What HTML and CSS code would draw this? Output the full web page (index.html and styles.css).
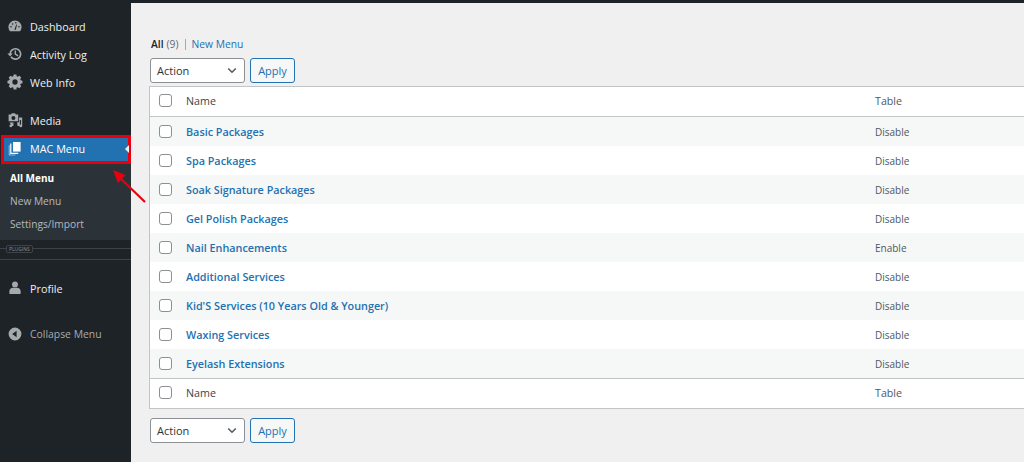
FILE: index.html
```html
<!DOCTYPE html>
<html lang="en">
<head>
<meta charset="utf-8">
<title>MAC Menu</title>
<link rel="stylesheet" href="styles.css">
</head>
<body>
<div class="topbar"></div>
<div class="shell">
  <aside class="sidebar">
    <nav class="group first">
      <a class="item"><svg class="ico" viewBox="0 0 20 20"><path d="M3.800 16.600C2.600 15.200 1.800 13.300 1.800 11.200 1.800 6.700 5.500 3 10 3s8.200 3.700 8.200 8.200c0 2.100-.8 4-2 5.400H3.800z"/><path class="cut" d="M9.300 14.700l2.300-6.500.9.300-1.500 6.200z"/><circle class="cut" cx="5" cy="11" r="1"/><circle class="cut" cx="7" cy="7.500" r="1"/><circle class="cut" cx="11" cy="6" r="1"/><circle class="cut" cx="15" cy="11" r="1"/></svg><span>Dashboard</span></a>
      <a class="item"><svg class="ico" viewBox="0 0 20 20"><path d="M10.500 2.500a7.500 7.500 0 1 1-6.300 11.500l1.700-1.100a5.500 5.500 0 1 0-.9-3.400h2.300L3.800 13.200.5 9.500h2.500a7.500 7.500 0 0 1 7.500-7z"/><path d="M9.500 5.500h1.800v4.200l3 1.800-.9 1.500-3.900-2.300z"/></svg><span>Activity Log</span></a>
      <a class="item"><svg class="ico" viewBox="0 0 20 20"><path fill-rule="evenodd" d="M8.300 1.500h3.400l.4 2.300 1.300.6 2-1.300 2.400 2.400-1.300 2 .5 1.300 2.300.5v3.400l-2.300.4-.5 1.300 1.300 2-2.400 2.400-2-1.300-1.300.5-.4 2.300H8.300l-.5-2.300-1.300-.5-2 1.300-2.400-2.400 1.300-2-.5-1.300-2.300-.4V9.300l2.300-.5.5-1.300-1.300-2 2.400-2.400 2 1.300 1.300-.6zM10 7.700a3.300 3.300 0 1 0 0 6.600 3.300 3.300 0 0 0 0-6.600z" transform="translate(0 -1)"/></svg><span>Web Info</span></a>
    </nav>
    <nav class="group second">
      <a class="item"><svg class="ico" viewBox="0 0 20 20"><path fill-rule="evenodd" d="M2 3h3l1-1.500h4L11 3h3v8.500H2zM8 5a2.500 2.500 0 1 0 0 5 2.500 2.500 0 0 0 0-5z"/><path d="M13 13.500V12.700h2V7h4v10.500a1.700 1.700 0 1 1-1.500-1.700V10h-1.500v7.500h-2.900V15.700a1.500 1.500 0 0 1-.1-2.200z"/><path d="M3 13h5v4.500H6.400A1.700 1.700 0 1 1 5 15.700z"/></svg><span>Media</span></a>
    </nav>
    <a class="item active"><svg class="ico white" viewBox="0 0 20 20"><path d="M7.500 2.500h9.500v12H7.500z"/><path d="M5.500 4.500v11.500h8.500v1.500H4V4.500z"/><path d="M3 6.500v12h7.500v.6H2.300V6.500z"/></svg><span>MAC Menu</span></a>
    <div class="submenu">
      <a class="sub current">All Menu</a>
      <a class="sub">New Menu</a>
      <a class="sub">Settings/Import</a>
    </div>
    <div class="divider"><span class="tag">PLUGINS</span></div>
    <a class="item profile"><svg class="ico" viewBox="0 0 20 20"><circle cx="10" cy="5.500" r="3.700"/><path d="M3 17.500v-3.500c0-2.500 2-4.200 4.200-4.200h5.600c2.200 0 4.200 1.700 4.200 4.200v3.500z"/></svg><span>Profile</span></a>
    <a class="item collapse"><svg class="ico" viewBox="0 0 20 20"><path fill-rule="evenodd" d="M10 2a8 8 0 1 1 0 16 8 8 0 0 1 0-16zM12 6L6.500 10l5.500 4z"/></svg><span>Collapse Menu</span></a>
    <svg class="pointer" viewBox="0 0 40 40"><path d="M37 34L11 9"/><path class="head" d="M5 2l12.500 5L10 15z"/></svg>
  </aside>
  <main class="content">
    <p class="views"><b>All</b> <span class="count">(9)</span><i class="sep"></i><a>New Menu</a></p>
    <div class="bulk">
      <div class="select"><span>Action</span><svg viewBox="0 0 12 8"><path d="M1.500 1.500L6 6l4.500-4.500"/></svg></div>
      <button class="apply">Apply</button>
    </div>
    <div class="table">
      <div class="row head"><i class="check"></i><span class="name">Name</span><span class="tbl">Table</span></div>
      <div class="row odd"><i class="check"></i><a class="name">Basic Packages</a><span class="tbl">Disable</span></div>
      <div class="row"><i class="check"></i><a class="name">Spa Packages</a><span class="tbl">Disable</span></div>
      <div class="row odd"><i class="check"></i><a class="name">Soak Signature Packages</a><span class="tbl">Disable</span></div>
      <div class="row"><i class="check"></i><a class="name">Gel Polish Packages</a><span class="tbl">Disable</span></div>
      <div class="row odd"><i class="check"></i><a class="name">Nail Enhancements</a><span class="tbl">Enable</span></div>
      <div class="row"><i class="check"></i><a class="name">Additional Services</a><span class="tbl">Disable</span></div>
      <div class="row odd"><i class="check"></i><a class="name">Kid'S Services (10 Years Old &amp; Younger)</a><span class="tbl">Disable</span></div>
      <div class="row"><i class="check"></i><a class="name">Waxing Services</a><span class="tbl">Disable</span></div>
      <div class="row odd"><i class="check"></i><a class="name">Eyelash Extensions</a><span class="tbl">Disable</span></div>
      <div class="row foot"><i class="check"></i><span class="name">Name</span><span class="tbl">Table</span></div>
    </div>
    <div class="bulk lower">
      <div class="select"><span>Action</span><svg viewBox="0 0 12 8"><path d="M1.500 1.500L6 6l4.500-4.500"/></svg></div>
      <button class="apply">Apply</button>
    </div>
  </main>
</div>
</body>
</html>
```

FILE: styles.css
```css
* { box-sizing: border-box; }
html, body { margin: 0; height: 462px; overflow: hidden; }
body { background: #f0f0f1; font-family: "Open Sans", "Liberation Sans", sans-serif; font-size: 11px; color: #3c434a; }
.topbar { height: 3px; background: #1d2327; }
.shell { display: flex; height: 459px; }
.sidebar { position: relative; width: 131px; flex: none; background: #1d2327; color: #f0f0f1; }
.group.first { padding-top: 10px; margin-top: -1px; }
.group.second { margin-top: 10px; }
.item { display: flex; align-items: center; height: 28px; padding-left: 7px; font-size: 10.800px; color: #f0f0f1; gap: 7px; }
.ico { width: 16px; height: 16px; flex: none; fill: #a7aaad; }
.ico .cut { fill: #1d2327; }
.ico.white { fill: #fff; }
.item.active { position: relative; background: #2271b1; color: #fff; outline: 3px solid #e8000f; outline-offset: -3px; padding: 0 0 3px 6px; margin: 1px 0 0 1px; height: 29px; width: 130px; }
.item.active::after { content: ""; position: absolute; right: 2px; top: 10px; border: 4px solid transparent; border-left-width: 0; border-right-color: #f0f0f1; }
.submenu { background: #2c3338; padding: 3px 0 0; height: 76px; }
.sub { display: block; height: 23px; line-height: 23px; padding-left: 10px; font-size: 10.200px; color: #b4b9be; }
.sub.current { color: #fff; font-weight: 700; font-size: 10px; }
.divider { position: relative; height: 20px; border-bottom: 1px solid #3c434a; }
.divider::before { content: ""; position: absolute; left: 0; right: 0; top: 8px; border-top: 1px solid #3c434a; }
.tag { position: absolute; left: 6px; top: 5px; font-size: 5px; line-height: 6px; padding: 0 2px; color: #8c8f94; background: #1d2327; border: 1px solid #3c434a; border-radius: 2px; }
.profile { margin-top: 14px; }
.collapse { margin-top: 18px; color: #a7aaad; font-size: 10.400px; }
.pointer { position: absolute; left: 108px; top: 165px; width: 40px; height: 40px; overflow: visible; }
.pointer path { stroke: #e8000f; stroke-width: 2.200; fill: none; }
.pointer .head { fill: #e8000f; stroke: none; }
.content { flex: 1; padding: 34px 0 0 18px; min-width: 0; }
.views { margin: 0; padding-left: 2px; height: 15px; line-height: 15px; font-size: 10.300px; color: #50575e; display: flex; align-items: center; }
.views b { font-weight: 600; color: #1d2327; margin-right: 3px; }
.count { color: #646970; }
.sep { width: 1px; height: 11px; background: #a7aaad; margin: 0 6px; }
.views a { color: #2271b1; }
.bulk { display: flex; gap: 5px; margin-top: 6px; }
.select { display: flex; align-items: center; justify-content: space-between; width: 95px; height: 25px; padding: 0 7px 0 6px; background: #fff; border: 1px solid #8c8f94; border-radius: 3px; font-size: 11px; color: #2c3338; margin-left: 1px; }
.select svg { width: 10px; height: 7px; fill: none; stroke: #50575e; stroke-width: 1.800; }
.apply { width: 45px; height: 25px; padding: 0; background: #f6f7f7; border: 1px solid #2271b1; border-radius: 3px; font: 11px "Open Sans", sans-serif; color: #2271b1; }
.table { margin-top: 3px; background: #fff; border: 1px solid #c3c4c7; border-right: 0; }
.row { display: flex; align-items: center; height: 29px; padding-left: 9px; font-size: 10px; }
.row.head { height: 30px; padding-bottom: 2px; border-bottom: 1px solid #c3c4c7; font-size: 10.700px; }
.row.foot { height: 30px; padding-bottom: 2px; border-top: 1px solid #c3c4c7; font-size: 10.700px; }
.row.odd { background: #f6f7f7; }
.check { width: 13px; height: 13px; flex: none; background: #fff; border: 1px solid #8c8f94; border-radius: 3px; }
.name { width: 689px; margin-left: 14px; flex: none; }
a.name { color: #2271b1; font-weight: 600; font-size: 10.800px; }
.tbl { color: #50575e; }
.lower { margin-top: 9px; }
```
